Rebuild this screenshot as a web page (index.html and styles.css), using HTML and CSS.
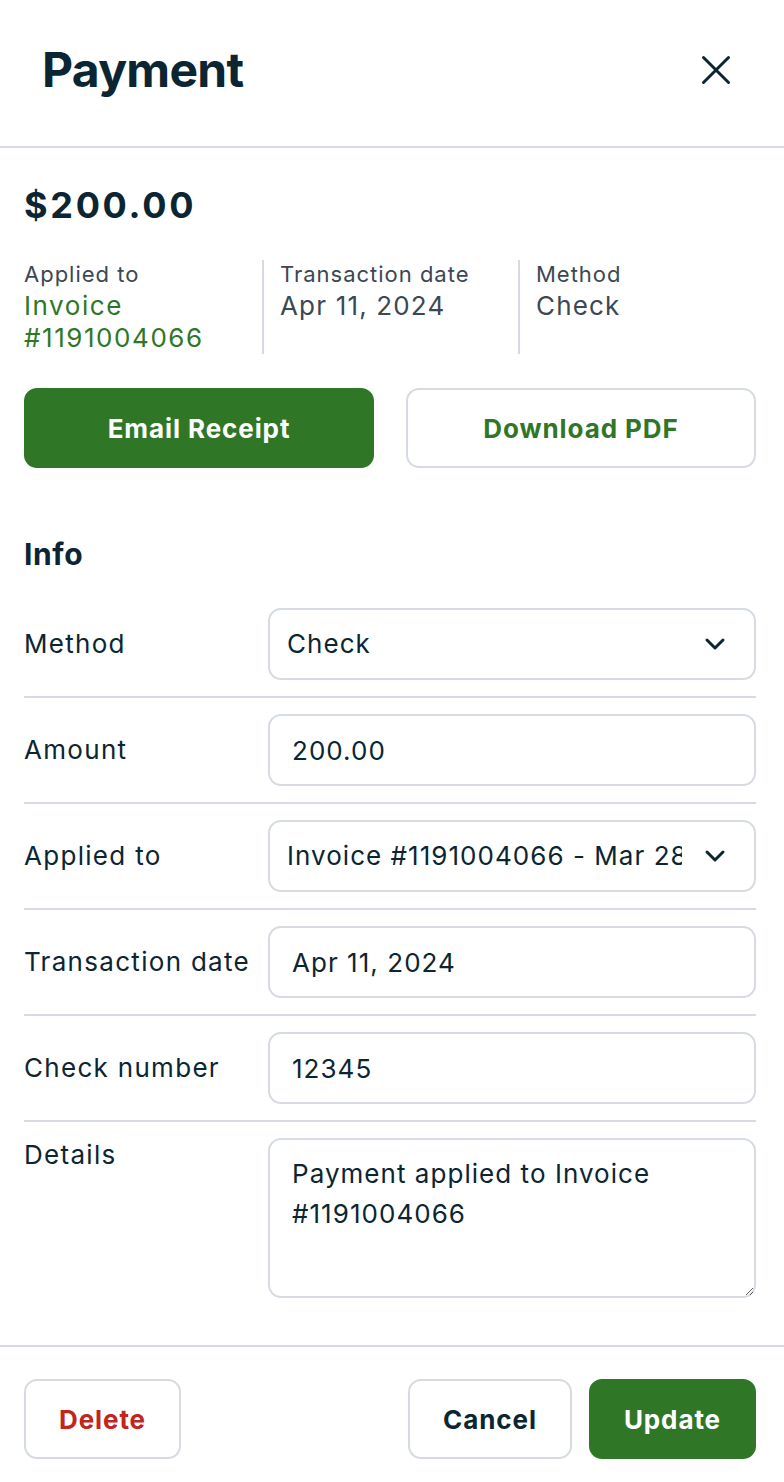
FILE: index.html
```html
<!DOCTYPE html>
<html lang="en">
<head>
<meta charset="utf-8">
<title>Payment</title>
<link rel="stylesheet" href="styles.css">
</head>
<body>
<div class="panel">
  <header class="header">
    <h1 class="title">Payment</h1>
    <button class="close" aria-label="Close">
      <svg width="30" height="30" viewBox="0 0 30 30"><path d="M2.5 2.5 L27.5 27.5 M27.5 2.5 L2.5 27.5" stroke="#0c2532" stroke-width="3" stroke-linecap="round" fill="none"/></svg>
    </button>
  </header>

  <main class="content">
    <div class="amount">$200.00</div>

    <div class="summary">
      <div class="sum-col">
        <div class="sum-label">Applied to</div>
        <div class="sum-value link">Invoice<br>#1191004066</div>
      </div>
      <div class="sum-col divided">
        <div class="sum-label">Transaction date</div>
        <div class="sum-value">Apr 11, 2024</div>
      </div>
      <div class="sum-col divided">
        <div class="sum-label">Method</div>
        <div class="sum-value">Check</div>
      </div>
    </div>

    <div class="actions">
      <button class="btn btn-primary">Email Receipt</button>
      <button class="btn btn-outline green-text">Download PDF</button>
    </div>

    <h2 class="section-title">Info</h2>

    <div class="form">
      <div class="row">
        <label class="row-label">Method</label>
        <div class="select">
          <span class="select-text">Check</span>
          <svg class="chev" width="22" height="14" viewBox="0 0 22 14"><path d="M3 3 L11 11 L19 3" stroke="#0c2532" stroke-width="3" fill="none" stroke-linecap="round" stroke-linejoin="round"/></svg>
        </div>
      </div>
      <div class="row">
        <label class="row-label">Amount</label>
        <input class="input" type="text" value="200.00">
      </div>
      <div class="row">
        <label class="row-label">Applied to</label>
        <div class="select">
          <span class="select-text">Invoice #1191004066 - Mar 28, 2024</span>
          <svg class="chev" width="22" height="14" viewBox="0 0 22 14"><path d="M3 3 L11 11 L19 3" stroke="#0c2532" stroke-width="3" fill="none" stroke-linecap="round" stroke-linejoin="round"/></svg>
        </div>
      </div>
      <div class="row">
        <label class="row-label">Transaction date</label>
        <input class="input" type="text" value="Apr 11, 2024">
      </div>
      <div class="row">
        <label class="row-label">Check number</label>
        <input class="input" type="text" value="12345">
      </div>
      <div class="row row-top">
        <label class="row-label">Details</label>
        <textarea class="textarea">Payment applied to Invoice #1191004066</textarea>
      </div>
    </div>
  </main>

  <footer class="footer">
    <button class="btn btn-outline red-text btn-sm">Delete</button>
    <div class="footer-right">
      <button class="btn btn-outline dark-text btn-sm">Cancel</button>
      <button class="btn btn-primary btn-sm">Update</button>
    </div>
  </footer>
</div>
</body>
</html>
```

FILE: styles.css
```css
* { box-sizing: border-box; }

html, body {
  margin: 0;
  padding: 0;
  background: #ffffff;
}

body {
  font-family: Inter, "Noto Sans", "Liberation Sans", sans-serif;
  color: #0c2532;
  width: 784px;
  letter-spacing: 0.04em;
}

.header {
  height: 148px;
  display: flex;
  align-items: center;
  justify-content: space-between;
  padding: 0 53px 6px 42px;
  border-bottom: 2px solid #d5dbe0;
}

.title {
  margin: 0;
  font-size: 48px;
  font-weight: 700;
  line-height: 56px;
  letter-spacing: -0.7px;
  color: #0c2532;
}

.close {
  border: 0;
  background: none;
  padding: 0;
  width: 30px;
  height: 30px;
  display: flex;
  cursor: pointer;
}

.content {
  padding: 35px 28px 31px 24px;
}

.amount {
  font-size: 36px;
  line-height: 44px;
  font-weight: 700;
  letter-spacing: 0.075em;
  color: #0c2532;
}

.summary {
  margin-top: 33px;
  display: grid;
  grid-template-columns: 238px 256px minmax(0, 1fr);
}

.sum-col.divided {
  border-left: 2px solid #d5dbe0;
  padding-left: 16px;
}

.sum-label {
  font-size: 22px;
  line-height: 28px;
  letter-spacing: 0.045em;
  color: #3b4853;
}

.sum-value {
  margin-top: 2px;
  font-size: 26px;
  line-height: 32px;
  letter-spacing: 0.045em;
  color: #3b4853;
}

.sum-value.link {
  color: #2f7727;
  letter-spacing: 0.06em;
}

.actions {
  margin-top: 34px;
  display: grid;
  grid-template-columns: 1fr 1fr;
  gap: 32px;
}

.btn {
  height: 80px;
  border-radius: 13px;
  font-family: inherit;
  font-size: 26px;
  font-weight: 700;
  letter-spacing: 0.035em;
  cursor: pointer;
  display: flex;
  align-items: center;
  justify-content: center;
}

.btn-primary {
  background: #2f7727;
  color: #ffffff;
  border: 2px solid #2f7727;
}

.btn-outline {
  background: #ffffff;
  border: 2px solid #d5dbe0;
}

.green-text { color: #2f7727; }
.red-text { color: #c1251b; }
.dark-text { color: #0c2532; }

.section-title {
  margin: 68px 0 20px;
  font-size: 30px;
  line-height: 36px;
  font-weight: 700;
  letter-spacing: 0.02em;
  color: #0c2532;
}

.row {
  display: grid;
  grid-template-columns: 244px minmax(0, 1fr);
  align-items: center;
  padding: 16px 0;
  border-bottom: 2px solid #d5dbe0;
}

.row:last-child {
  border-bottom: 0;
}

.row-top {
  align-items: start;
}

.row-label {
  font-size: 26px;
  line-height: 32px;
  letter-spacing: 0.05em;
  color: #0c2532;
}

.row-top .row-label {
  margin-top: 1px;
}

.input,
.select,
.textarea {
  width: 100%;
  min-width: 0;
  border: 2px solid #d5dbe0;
  border-radius: 13px;
  font-family: inherit;
  font-size: 26px;
  letter-spacing: 0.04em;
  color: #0c2532;
  background: #ffffff;
}

.input {
  height: 72px;
  padding: 0 22px;
  outline: none;
}

.select {
  height: 72px;
  display: flex;
  align-items: center;
  padding: 0 28px 0 17px;
  gap: 22px;
}

.select-text {
  flex: 1;
  min-width: 0;
  white-space: nowrap;
  overflow: hidden;
  line-height: 32px;
}

.chev {
  flex: none;
}

.textarea {
  height: 160px;
  padding: 14px 22px;
  line-height: 40px;
  resize: vertical;
  outline: none;
  display: block;
}

.footer {
  border-top: 2px solid #d5dbe0;
  padding: 32px 28px 22px 24px;
  display: flex;
  justify-content: space-between;
  align-items: center;
}

.footer-right {
  display: flex;
  gap: 17px;
}

.btn-sm {
  padding: 0 33px;
}
```
